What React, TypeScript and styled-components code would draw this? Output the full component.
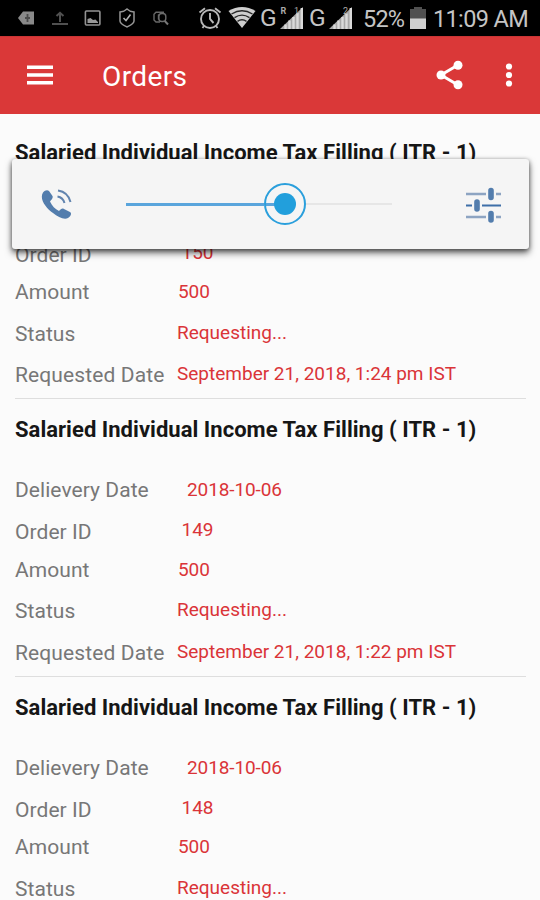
import React from "react";
import styled, { createGlobalStyle } from "styled-components";

const GlobalStyle = createGlobalStyle`
  * { box-sizing: border-box; }
  html, body { margin: 0; padding: 0; background: #fbfbfb; }
  body { font-family: Roboto, "Liberation Sans", sans-serif; }
`;

const Screen = styled.div`
  position: relative;
  display: flex;
  flex-direction: column;
  width: 540px;
  height: 900px;
  overflow: hidden;
  background: #fbfbfb;
`;

const StatusBar = styled.header`
  display: flex;
  flex: none;
  align-items: center;
  height: 36px;
  padding-left: 17px;
  background: #000;
  color: #c4c4c4;
`;

const StatusIcon = styled.svg<{ $gap?: number }>`
  display: block;
  flex: none;
  margin-right: ${(p) => p.$gap ?? 0}px;
`;

const NetworkType = styled.span<{ $gap: number }>`
  flex: none;
  width: 17px;
  margin-right: ${(p) => p.$gap}px;
  font-size: 24.5px;
  line-height: 34px;
  white-space: nowrap;
`;

const BatteryText = styled.span`
  flex: none;
  width: 47px;
  padding-top: 2px;
  font-size: 23.5px;
  line-height: 34px;
  letter-spacing: -0.8px;
  white-space: nowrap;
`;

const Clock = styled.time`
  padding-top: 2px;
  font-size: 23.5px;
  line-height: 34px;
  letter-spacing: -0.65px;
  white-space: nowrap;
`;

const AppBar = styled.nav`
  display: flex;
  flex: none;
  align-items: center;
  height: 78px;
  padding: 0 20px 2px 27px;
  background: #da3838;
  border-top: 1px solid #c93434;
  color: #fff;
`;

const IconButton = styled.button<{ $gap?: number }>`
  display: flex;
  flex: none;
  padding: 0;
  margin-right: ${(p) => p.$gap ?? 0}px;
  border: 0;
  background: none;
  color: inherit;
`;

const PageTitle = styled.h1`
  flex: 1;
  margin: 0;
  padding-top: 4px;
  font-size: 28px;
  font-weight: 400;
  line-height: 36px;
  letter-spacing: 0.4px;
`;

const OrderList = styled.main`
  display: flex;
  flex: none;
  flex-direction: column;
  padding: 7.6px 14px 0 15px;
`;

const OrderCard = styled.article`
  height: 277.6px;
  border-bottom: 1px solid #dedede;
`;

const OrderTitle = styled.h2`
  margin: 0;
  font-size: 22px;
  font-weight: 700;
  line-height: 61px;
  letter-spacing: 0.03px;
  color: #161616;
  white-space: nowrap;
`;

const Field = styled.div<{ $before: number }>`
  display: flex;
  height: 36px;
  margin-top: ${(p) => p.$before}px;
  white-space: nowrap;
`;

const Label = styled.span<{ $spacing?: number }>`
  width: 162px;
  font-size: 21px;
  line-height: 36px;
  letter-spacing: ${(p) => p.$spacing ?? 0.06}px;
  color: #777;
`;

const Value = styled.span<{ $indent: number; $line: number; $spacing?: number }>`
  padding-left: ${(p) => p.$indent}px;
  font-size: 19px;
  line-height: ${(p) => p.$line}px;
  letter-spacing: ${(p) => p.$spacing ?? 0}px;
  color: #da3438;
`;

const VolumePanel = styled.section`
  position: absolute;
  top: 159px;
  left: 12px;
  display: flex;
  align-items: center;
  width: 517px;
  height: 90px;
  padding: 0 27px 0 28px;
  border-radius: 3px;
  background: #f5f5f5;
  box-shadow: 0 4px 7px rgba(0, 0, 0, 0.58), 0 1px 4px rgba(0, 0, 0, 0.42);
`;

const SliderTrack = styled.div`
  display: flex;
  align-items: center;
  width: 266px;
  margin: 0 74px 0 53px;
`;

const TrackFilled = styled.div`
  flex: none;
  width: 138px;
  height: 3px;
  background: #5aa5dc;
`;

const TrackRest = styled.div`
  flex: 1;
  height: 2px;
  background: #e6e6e6;
`;

const Thumb = styled.div`
  display: flex;
  flex: none;
  align-items: center;
  justify-content: center;
  width: 42px;
  height: 42px;
  border: 2px solid #2a9fdc;
  border-radius: 50%;
  background: linear-gradient(#5aa5dc, #5aa5dc) 0 50% / 10px 3px no-repeat;

  &::after {
    width: 22px;
    height: 22px;
    border-radius: 50%;
    background: #229fdc;
    content: "";
  }
`;

interface Order {
  id: string;
  requested: string;
}

const orders: Order[] = [
  { id: "150", requested: "September 21, 2018, 1:24 pm IST" },
  { id: "149", requested: "September 21, 2018, 1:22 pm IST" },
  { id: "148", requested: "September 21, 2018, 1:20 pm IST" },
];

function OrderEntry({ id, requested }: Order) {
  return (
    <OrderCard>
      <OrderTitle>Salaried Individual Income Tax Filling ( ITR - 1)</OrderTitle>
      <Field $before={12}>
        <Label>Delievery Date</Label>
        <Value $indent={10} $line={36} $spacing={-0.1}>2018-10-06</Value>
      </Field>
      <Field $before={6.2}>
        <Label>Order ID</Label>
        <Value $indent={4.5} $line={31.4}>{id}</Value>
      </Field>
      <Field $before={1.5}>
        <Label>Amount</Label>
        <Value $indent={1} $line={36.2} $spacing={-0.1}>500</Value>
      </Field>
      <Field $before={5.5}>
        <Label>Status</Label>
        <Value $indent={0} $line={34.4}>Requesting...</Value>
      </Field>
      <Field $before={5.4}>
        <Label $spacing={0.12}>Requested Date</Label>
        <Value $indent={0} $line={34.4}>{requested}</Value>
      </Field>
    </OrderCard>
  );
}

function Signal({ roaming, label, gap }: { roaming?: boolean; label: string; gap: number }) {
  return (
    <StatusIcon $gap={gap} width="24" height="28" viewBox="0 0 24 28">
      <path d="M0 25L23 3V25Z" fill="#a8a8a8" />
      <path d="M5.5 20.5V25M9.5 16.5V25M13.5 13V25M17.5 9V25M21.8 4V25" stroke="#dadada" strokeWidth="2.4" />
      {roaming && <text x="0.5" y="10" fontSize="9" fontWeight="700" fill="#aaa">R</text>}
      <text x="14" y="10" fontSize="9" fill="#aaa">{label}</text>
    </StatusIcon>
  );
}

export default function App() {
  return (
    <Screen>
      <GlobalStyle />
      <StatusBar>
        <StatusIcon $gap={16} width="18" height="16" viewBox="0 0 18 16">
          <path d="M1 8L6 1.5H17V14.5H6Z" fill="#898989" />
          <path d="M10.5 4V12M8 8H13" fill="none" stroke="#4a4a4a" strokeWidth="1.8" />
        </StatusIcon>
        <StatusIcon $gap={15} width="18" height="16" viewBox="0 0 18 16">
          <path d="M1 14H17M9 12V3M5.5 6L9 2.8L12.5 6" fill="none" stroke="#505050" strokeWidth="2" />
        </StatusIcon>
        <StatusIcon $gap={16} width="18" height="16" viewBox="0 0 18 16">
          <rect x="1.4" y="1" width="14.5" height="14" rx="1" fill="none" stroke="#929292" strokeWidth="1.6" />
          <path d="M3.5 13V9L6.5 8L9 10L11.5 9.4L14 12V13Z" fill="#999" />
        </StatusIcon>
        <StatusIcon $gap={16} width="18" height="20" viewBox="0 0 18 20">
          <path d="M9 1C7 3 4 3.8 2 4V13C2 16 6 17.5 9 19C12 17.5 16 16 16 13V4C14 3.8 11 3 9 1Z" fill="none" stroke="#969696" strokeWidth="1.5" />
          <path d="M5.5 10L8 12.5L12.5 6.5" fill="none" stroke="#b0b0b0" strokeWidth="1.6" />
        </StatusIcon>
        <StatusIcon $gap={28} width="18" height="16" viewBox="0 0 18 16">
          <path d="M12 2.2H4L2 4.2V10L4 12H8M6.5 4.5V9.5" fill="none" stroke="#686868" strokeWidth="1.4" />
          <rect x="6.8" y="3.5" width="7" height="8" rx="3" fill="none" stroke="#6c6c6c" strokeWidth="1.4" />
          <path d="M12.8 11L16 14.5" stroke="#777" strokeWidth="2" />
        </StatusIcon>
        <StatusIcon $gap={6} width="24" height="24" viewBox="0 0 24 24">
          <circle cx="12" cy="13" r="9" fill="none" stroke="#b8b8b8" strokeWidth="1.9" />
          <path d="M12 7V13L15.5 17M1.5 6.5L7 2.2M17 2.2L22.5 6.5M6 20L4.5 22M18 20L19.5 22" fill="none" stroke="#b8b8b8" strokeWidth="1.9" />
        </StatusIcon>
        <StatusIcon $gap={4} width="28" height="24" viewBox="0 0 28 24">
          <path d="M0.5 5C9 -.5 19 -.5 27.5 5L14 22Z" fill="#cecece" />
          <path d="M3.5 8Q14 1.4 24.5 8M6.5 11.7Q14 6.5 21.5 11.7M9.5 15.3Q14 12.2 18.5 15.3" fill="none" stroke="#282828" strokeWidth="1.4" />
        </StatusIcon>
        <NetworkType $gap={3}>G</NetworkType>
        <Signal roaming label="1" gap={5} />
        <NetworkType $gap={3}>G</NetworkType>
        <Signal label="2" gap={10} />
        <BatteryText>52%</BatteryText>
        <StatusIcon $gap={7} width="16" height="24" viewBox="0 0 16 24">
          <path d="M0 3H4V1H12V3H16V23H0Z" fill="#505050" />
          <path d="M0 12.5H16V23H0Z" fill="#cfcfcf" />
        </StatusIcon>
        <Clock>11:09 AM</Clock>
      </StatusBar>

      <AppBar>
        <IconButton aria-label="Menu" $gap={49}>
          <svg width="26" height="20" viewBox="0 0 26 20">
            <path d="M0 2.3H26M0 10H26M0 17.7H26" stroke="currentColor" strokeWidth="3.6" />
          </svg>
        </IconButton>
        <PageTitle>Orders</PageTitle>
        <IconButton aria-label="Share" $gap={41}>
          <svg width="28" height="30" viewBox="0 0 28 30">
            <path d="M22 5L5 15L22 25" fill="none" stroke="currentColor" strokeWidth="3" />
            <circle cx="5" cy="15" r="4.5" fill="currentColor" />
            <circle cx="22" cy="5.2" r="4.5" fill="currentColor" />
            <circle cx="22" cy="24.8" r="4.5" fill="currentColor" />
          </svg>
        </IconButton>
        <IconButton aria-label="More options" $gap={7}>
          <svg width="8" height="24" viewBox="0 0 8 24">
            <circle cx="4" cy="3.5" r="3.1" fill="currentColor" />
            <circle cx="4" cy="12" r="3.1" fill="currentColor" />
            <circle cx="4" cy="20.5" r="3.1" fill="currentColor" />
          </svg>
        </IconButton>
      </AppBar>

      <OrderList>
        {orders.map((order) => (
          <OrderEntry key={order.id} {...order} />
        ))}
      </OrderList>

      <VolumePanel aria-label="Call volume">
        <svg width="33" height="32" viewBox="0 0 33 32">
          <path d="M3 4.5C5 2 7.5 1.5 9 3L12.5 8C13.5 10 11 12 10 13.5C12 18 15 21 19 23C21 21 22 20 24 21L30 24C32 25 31 28 28 30C24 32 18 29 13 25C6 20 -1 11 3 4.5Z" fill="#537dad" />
          <path d="M17.5 8.5Q23 9.5 24.5 15M18 2.5Q28 4 30.5 14" fill="none" stroke="#6184af" strokeWidth="2" />
        </svg>
        <SliderTrack>
          <TrackFilled />
          <Thumb />
          <TrackRest />
        </SliderTrack>
        <svg width="36" height="38" viewBox="0 0 36 38">
          <path d="M0 9H20M30 9H35M0 32H20M30 32H35" stroke="#8da4c2" strokeWidth="2.5" />
          <path d="M0 20.5H6M16 20.5H35" stroke="#3e6fa8" strokeWidth="2" />
          <path d="M25 5.5V12.5M11 17V24M25 28.5V35" stroke="#537dad" strokeWidth="5.6" strokeLinecap="round" />
        </svg>
      </VolumePanel>
    </Screen>
  );
}
